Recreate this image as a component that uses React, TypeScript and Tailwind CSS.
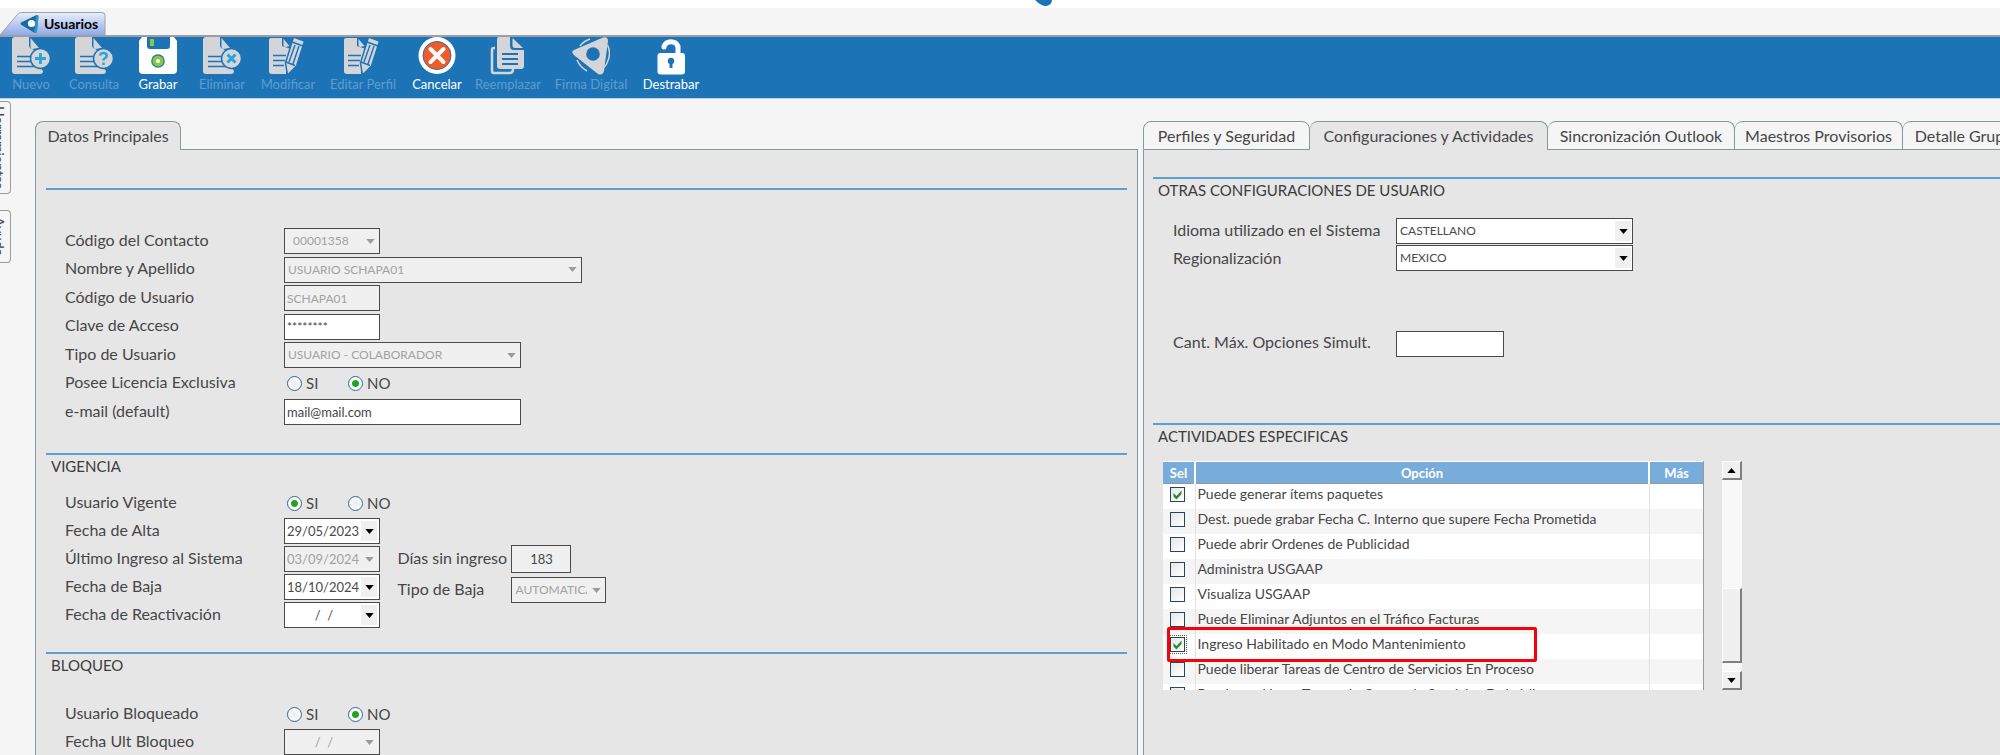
import { useState, type ReactNode } from "react";
import clsx from "clsx";

function Logo({ className }: { className?: string }) {
    return (
        <svg viewBox="0 0 20 20" className={className} aria-hidden="true">
            <path d="M1.5 8.2 16 1.2c1.600-.7 2.500.3 2.400 1.800L17 17c-.2 1.800-1.600 2.400-3 1.400L1.600 11c-1.300-.9-1.300-2.100-.1-2.800z" fill="#1a6a9e" />
            <path d="M16 1.200c1.600-.7 2.500.3 2.400 1.800L17 17c-.2 1.800-1.600 2.400-3 1.400z" fill="#2f93c4" />
            <circle cx="11.500" cy="9.500" r="3.600" fill="#fff" />
        </svg>
    );
}

function Page() {
    return (
        <>
            <path d="M0 3q0-3 3-3h14v8q0 3 3 4l8 4v14l3 4q0 3-3 3H3q-3 0-3-3z" fill="#d3d5d8" />
            <path d="M18.500 1l8.500 10-6.500 1q-2 0-2-2z" fill="#d3d5d8" />
            <path d="M5 19.500h15M5 24.500h15M5 29.500h17" stroke="#1c74b7" strokeWidth="1.500" />
        </>
    );
}

function Pencil() {
    return (
        <>
            <path d="M0 3q0-2 2-2h11v8l9 3-5 15v10H3q-3 0-3-3z" fill="#d3d5d8" />
            <path d="M14.500 2l6 7-4 1q-2 0-2-2z" fill="#d3d5d8" />
            <path d="M4 18.500h13M4 23.500h12M4 28.500h11" stroke="#1c74b7" strokeWidth="1.500" />
            <path d="M24.500 0l11 4-8 25-9 9-2-12z" fill="#d3d5d8" stroke="#1c74b7" strokeWidth="1.500" strokeLinejoin="round" />
            <path d="M23 5l11 4M17 25l9 3.500M26 8l-6 17M30 9l-6 18" stroke="#1c74b7" strokeWidth="1.400" fill="none" />
        </>
    );
}

const icons: Record<string, ReactNode> = {
    Nuevo: (
        <>
            <Page />
            <circle cx="28.500" cy="21.500" r="10" fill="#d3d5d8" stroke="#1c74b7" strokeWidth="1.500" />
            <path d="M28.500 16v11M23 21.500h11" stroke="#2ba3dc" strokeWidth="2.800" />
        </>
    ),
    Consulta: (
        <>
            <Page />
            <circle cx="28.500" cy="21.500" r="10" fill="#d3d5d8" stroke="#1c74b7" strokeWidth="1.500" />
            <path d="M25 18.500q.5-2.500 3.500-2.500t3.300 2.500q0 1.600-1.800 2.500-1.500.8-1.500 2.500M28.500 25.500v2.500" stroke="#2ba3dc" strokeWidth="2.500" fill="none" />
        </>
    ),
    Grabar: (
        <>
            <path d="M3 0h32l3 4v29q0 4-4 4H4q-4 0-4-4V4z" fill="#fff" />
            <path d="M8 0h23v9q0 3-3 3H11q-3 0-3-3z" fill="#1c74b7" />
            <path d="M11 2h4v7h-4z" fill="#8cc63f" />
            <circle cx="19" cy="24" r="6.800" fill="#1c74b7" />
            <circle cx="19" cy="24" r="5.600" fill="#8cc63f" />
            <circle cx="19" cy="24" r="2" fill="#fff" />
        </>
    ),
    Eliminar: (
        <>
            <Page />
            <circle cx="28.500" cy="21.500" r="10" fill="#d3d5d8" stroke="#1c74b7" strokeWidth="1.500" />
            <path d="M24.500 17.500l8 8M32.500 17.500l-8 8" stroke="#2ba3dc" strokeWidth="3" />
        </>
    ),
    Modificar: <Pencil />,
    "Editar Perfil": <Pencil />,
    Cancelar: (
        <>
            <circle cx="19" cy="18.500" r="18.500" fill="#fff" />
            <circle cx="19" cy="18.500" r="14" fill="#f15a2b" stroke="#3b6f9c" strokeWidth="1" />
            <path d="M12.500 12l13 13M25.500 12l-13 13" stroke="#fff" strokeWidth="4" strokeLinecap="round" />
        </>
    ),
    Reemplazar: (
        <>
            <path d="M6 11H5q-2 0-2 2v21q0 2 2 2h16q3 0 3-4" fill="none" stroke="#d3d5d8" strokeWidth="2.500" />
            <path d="M9 0h12v9q0 4 4 4h10v16q0 3-3 3H11q-3 0-3-3V3q0-2 1-3z" fill="#d3d5d8" />
            <path d="M23.500 1L34 11h-8q-2.500 0-2.500-2z" fill="#d3d5d8" />
            <path d="M13 17h16M13 22h16M13 27h16" stroke="#1c74b7" strokeWidth="1.800" />
        </>
    ),
    "Firma Digital": (
        <>
            <path d="M35.500 8q4 8 0 17-1 3-4 6M5 23q3 7 10 11M8 9q4-5 10-7" fill="none" stroke="#d3d5d8" strokeWidth="1.500" />
            <path d="M2 13L31 .5q5-1.500 5 3.500l-4 30q-1.500 5-6 3L2.500 18.500q-4-3.500-.5-5.500z" fill="#d3d5d8" />
            <circle cx="21" cy="17" r="6.800" fill="#1c74b7" />
        </>
    ),
    Destrabar: (
        <>
            <path d="M12 10V9.500a7.500 7.500 0 0 1 14 0V18" fill="none" stroke="#fff" strokeWidth="5" strokeLinecap="round" />
            <rect x="5.500" y="16" width="27.500" height="21.500" rx="3" fill="#fff" />
            <circle cx="19" cy="24" r="3.200" fill="#1c74b7" />
            <path d="M17.500 25h3v6h-3z" fill="#1c74b7" />
        </>
    ),
};

const toolbar = [
    { label: "Nuevo", enabled: false },
    { label: "Consulta", enabled: false },
    { label: "Grabar", enabled: true },
    { label: "Eliminar", enabled: false },
    { label: "Modificar", enabled: false },
    { label: "Editar Perfil", enabled: false },
    { label: "Cancelar", enabled: true },
    { label: "Reemplazar", enabled: false },
    { label: "Firma Digital", enabled: false },
    { label: "Destrabar", enabled: true },
];

const initialOptions = [
    { label: "Puede generar ítems paquetes", checked: true },
    { label: "Dest. puede grabar Fecha C. Interno que supere Fecha Prometida", checked: false },
    { label: "Puede abrir Ordenes de Publicidad", checked: false },
    { label: "Administra USGAAP", checked: false },
    { label: "Visualiza USGAAP", checked: false },
    { label: "Puede Eliminar Adjuntos en el Tráfico Facturas", checked: false },
    { label: "Ingreso Habilitado en Modo Mantenimiento", checked: true },
    { label: "Puede liberar Tareas de Centro de Servicios En Proceso", checked: false },
    { label: "Puede ver Horas Tareas de Centro de Servicios En Inédito", checked: false },
];

// row that keeps the keyboard focus mark
const focusedOption = 6;

const fieldBase = "h-[26px] border border-[#4a4a4a] leading-5 rounded-none outline-none opacity-100";

function Arrow({ up }: { up?: boolean }) {
    return (
        <svg viewBox="0 0 10 6" className="w-[9px] h-[5px] fill-current" aria-hidden="true">
            <path d={up ? "M0 6h10L5 0z" : "M0 0h10L5 6z"} />
        </svg>
    );
}

function Row({ id, label, children }: { id: string; label: string; children: ReactNode }) {
    return (
        <div className="flex items-center h-[26px]">
            <label htmlFor={id} className="w-[219px] shrink-0 leading-5 pb-[3px]">{label}</label>
            {children}
        </div>
    );
}

function Combo({ id, value, width, disabled, pad }: { id: string; value: string; width: string; disabled?: boolean; pad?: string }) {
    return (
        <div className={clsx("relative", width)}>
            <select
                id={id}
                disabled={disabled}
                defaultValue={value}
                className={clsx(fieldBase, "block w-full appearance-none text-[12px] pr-[18px]", pad ?? "pl-[3px]", disabled ? "bg-[#f0f0f0] text-[#a2a2a2]" : "bg-white text-[#4a4a4a]")}
            >
                <option>{value}</option>
            </select>
            <span
                className={clsx(
                    "absolute right-[2px] top-[3px] bottom-[3px] w-4 flex items-center justify-center pointer-events-none bg-[#f0f0f0]",
                    disabled ? "text-[#9a9a9a]" : "text-black",
                )}
            >
                <Arrow />
            </span>
        </div>
    );
}

function DateField({ id, value, disabled }: { id: string; value: string; disabled?: boolean }) {
    return (
        <div className={clsx("flex w-24 h-[26px] border border-[#4a4a4a] p-[2px]", disabled ? "bg-[#f0f0f0] text-[#a2a2a2]" : "bg-white text-[#4a4a4a]")}>
            <input
                id={id}
                disabled={disabled}
                defaultValue={value}
                className={clsx("w-0 flex-1 text-[13px] leading-5 outline-none whitespace-pre", value.length < 10 && "text-center")}
            />
            <button
                type="button"
                disabled={disabled}
                aria-label="Abrir calendario"
                className={clsx("w-4 flex items-center justify-center bg-[#f0f0f0]", disabled ? "text-[#9a9a9a]" : "text-black")}
            >
                <Arrow />
            </button>
        </div>
    );
}

function YesNo({ id, value }: { id: string; value: "SI" | "NO" }) {
    const [selected, setSelected] = useState(value);
    const radio =
        "appearance-none size-[15px] rounded-full border border-[#2f6596] bg-white bg-[radial-gradient(circle,#ececec,#ffffff)] checked:bg-[radial-gradient(circle,#1fa51f_0_3px,#ffffff_4px)]";

    return (
        <div className="flex items-center pl-[3px] gap-[29px] text-[15px]">
            <label className="flex items-center gap-1 w-8">
                <input id={id} type="radio" name={id} checked={selected === "SI"} onChange={() => setSelected("SI")} className={radio} />
                SI
            </label>
            <label className="flex items-center gap-1">
                <input type="radio" name={id} checked={selected === "NO"} onChange={() => setSelected("NO")} className={radio} />
                NO
            </label>
        </div>
    );
}

function Section({ title, children }: { title?: string; children?: ReactNode }) {
    return (
        <section className="border-t-2 border-[#5b9fd3]">
            {title && <h2 className="pl-[5px] text-[15px] leading-[22px] text-[#3c3c3c]">{title}</h2>}
            {children}
        </section>
    );
}

function Tab({ label, width, active }: { label: string; width: string; active?: boolean }) {
    return (
        <button
            type="button"
            role="tab"
            aria-selected={!!active}
            className={clsx(
                "h-[29px] shrink-0 rounded-t-lg border-t border-r border-[#87969b] whitespace-nowrap",
                width,
                active ? "bg-[#e6e6e6]" : "bg-[#f5f5f5] border-b",
            )}
        >
            {label}
        </button>
    );
}

function MainData() {
    return (
        <section className="flex flex-col min-w-0">
            <div role="tablist" className="flex">
                <Tab label="Datos Principales" width="w-[146px] border-l" active />
                <div className="flex-1 border-b border-[#87969b]" />
            </div>
            <div className="flex-1 border-x border-[#87969b] bg-[#e6e6e6] pt-[38px] px-[10px]">
                <Section>
                    <div className="flex flex-col justify-between h-[197px] mt-[38px] pl-[19px]">
                        <Row id="contacto" label="Código del Contacto">
                            <Combo id="contacto" value="00001358" width="w-24" pad="pl-2" disabled />
                        </Row>
                        <Row id="nombre" label="Nombre y Apellido">
                            <Combo id="nombre" value="USUARIO SCHAPA01" width="w-[298px]" disabled />
                        </Row>
                        <Row id="codigo" label="Código de Usuario">
                            <input id="codigo" disabled defaultValue="SCHAPA01" className={clsx(fieldBase, "w-24 px-[2px] text-[12px] bg-[#f0f0f0] text-[#a2a2a2]")} />
                        </Row>
                        <Row id="clave" label="Clave de Acceso">
                            <input id="clave" defaultValue="********" className={clsx(fieldBase, "w-24 px-[2px] text-[12px] bg-white")} />
                        </Row>
                        <Row id="tipo" label="Tipo de Usuario">
                            <Combo id="tipo" value="USUARIO - COLABORADOR" width="w-[237px]" disabled />
                        </Row>
                        <Row id="licencia" label="Posee Licencia Exclusiva">
                            <YesNo id="licencia" value="NO" />
                        </Row>
                        <Row id="email" label="e-mail (default)">
                            <input id="email" type="email" defaultValue="mail@mail.com" className={clsx(fieldBase, "w-[237px] px-[2px] text-[13px] bg-white")} />
                        </Row>
                    </div>
                </Section>
                <div className="mt-7">
                    <Section title="VIGENCIA">
                        <div className="flex mt-[13px] pl-[19px]">
                            <div className="flex flex-col gap-[2px]">
                                <Row id="vigente" label="Usuario Vigente">
                                    <YesNo id="vigente" value="SI" />
                                </Row>
                                <Row id="alta" label="Fecha de Alta">
                                    <DateField id="alta" value="29/05/2023" />
                                </Row>
                                <Row id="ultimo" label="Último Ingreso al Sistema">
                                    <DateField id="ultimo" value="03/09/2024" disabled />
                                </Row>
                                <Row id="baja" label="Fecha de Baja">
                                    <DateField id="baja" value="18/10/2024" />
                                </Row>
                                <Row id="reactivacion" label="Fecha de Reactivación">
                                    <DateField id="reactivacion" value="/  /" />
                                </Row>
                            </div>
                            <div className="grid grid-cols-[114px_auto] content-start items-center gap-y-1 pl-[7px] pt-[55px]">
                                <label htmlFor="dias" className="whitespace-nowrap leading-5 pb-[3px]">Días sin ingreso</label>
                                <input id="dias" readOnly defaultValue="183" className="w-[60px] h-7 border border-[#4a4a4a] bg-[#f0f0f0] text-center text-[13px]" />
                                <label htmlFor="tipobaja" className="leading-5 pb-[3px]">Tipo de Baja</label>
                                <Combo id="tipobaja" value="AUTOMATICA" width="w-[95px]" disabled />
                            </div>
                        </div>
                    </Section>
                </div>
                <div className="mt-6">
                    <Section title="BLOQUEO">
                        <div className="flex flex-col gap-[2px] mt-[25px] pl-[19px]">
                            <Row id="bloqueado" label="Usuario Bloqueado">
                                <YesNo id="bloqueado" value="NO" />
                            </Row>
                            <Row id="ultbloqueo" label="Fecha Ult Bloqueo">
                                <DateField id="ultbloqueo" value="/  /" disabled />
                            </Row>
                        </div>
                    </Section>
                </div>
            </div>
        </section>
    );
}

function OptionsTable() {
    const [options, setOptions] = useState(initialOptions);

    const toggle = (index: number) => {
        setOptions(options.map((o, i) => (i === index ? { ...o, checked: !o.checked } : o)));
    };

    return (
        <div className="relative w-[541px] h-[229px] overflow-hidden border-r border-[#9a9a9a]">
            <table className="w-full table-fixed border-collapse text-[14px] leading-5">
                <colgroup>
                    <col className="w-8" />
                    <col />
                    <col className="w-[54px]" />
                </colgroup>
                <thead>
                    <tr className="h-[22px] bg-[#78addb] text-white text-[13px] border-t border-t-white border-b border-b-[#8f9ba5]">
                        <th className="p-0 font-bold border-r-2 border-white">Sel</th>
                        <th className="p-0 font-bold border-r-2 border-white">Opción</th>
                        <th className="p-0 font-bold">Más</th>
                    </tr>
                </thead>
                <tbody>
                    {options.map((option, i) => (
                        <tr key={option.label} className="h-[25px] bg-white even:bg-[#f5f5f5]">
                            <td className="p-0 pb-1 border-r border-[#e2e2e2]">
                                <div className="flex justify-center pr-[2px]">
                                    <label className="relative flex size-[15px]">
                                        <input
                                            type="checkbox"
                                            aria-label={option.label}
                                            checked={option.checked}
                                            onChange={() => toggle(i)}
                                            className={clsx(
                                                "appearance-none size-[15px] border border-[#26455e] bg-linear-to-br from-[#e6e6e6] to-white",
                                                i === focusedOption && "outline-1 outline-dotted outline-offset-1 outline-[#555]",
                                            )}
                                        />
                                        {option.checked && (
                                            <svg viewBox="0 0 15 15" className="absolute inset-0 pointer-events-none" aria-hidden="true">
                                                <path d="M3.500 6l3 3 5-5.500v3.500l-5 5.500-3-3z" fill="#2c8a2c" />
                                            </svg>
                                        )}
                                    </label>
                                </div>
                            </td>
                            <td className="p-0 pb-[5px] pl-[2px] border-r border-[#e2e2e2] whitespace-nowrap">{option.label}</td>
                            <td className="p-0" />
                        </tr>
                    ))}
                </tbody>
            </table>
        </div>
    );
}

function ScrollBar() {
    const raised = "border border-t-white border-l-white border-r-2 border-b-2 border-r-[#808080] border-b-[#808080] bg-[#f0f0f0]";

    return (
        <div className="flex flex-col w-5 h-[229px] bg-[#f8f8f8] text-black">
            <button type="button" aria-label="Subir" className={clsx(raised, "h-[19px] flex items-center justify-center")}>
                <Arrow up />
            </button>
            <div className="flex-1" />
            <div className={clsx(raised, "h-[75px]")} />
            <div className="h-2" />
            <button type="button" aria-label="Bajar" className={clsx(raised, "h-[19px] flex items-center justify-center")}>
                <Arrow />
            </button>
        </div>
    );
}

function Settings() {
    return (
        <section className="flex flex-col min-w-0 overflow-hidden">
            <div role="tablist" className="flex">
                <Tab label="Perfiles y Seguridad" width="w-[167px] border-l" />
                <Tab label="Configuraciones y Actividades" width="w-[238px]" active />
                <Tab label="Sincronización Outlook" width="w-[187px]" />
                <Tab label="Maestros Provisorios" width="w-[168px]" />
                <Tab label="Detalle Grupos" width="w-[130px]" />
            </div>
            <div className="flex-1 border-l border-[#87969b] bg-[#e6e6e6] pt-[27px] pl-[9px]">
                <Section title="OTRAS CONFIGURACIONES DE USUARIO">
                    <div className="grid grid-cols-[223px_auto] justify-start items-center gap-y-[1px] mt-[17px] pl-5">
                        <label htmlFor="idioma" className="whitespace-nowrap leading-5 pb-[2px]">Idioma utilizado en el Sistema</label>
                        <Combo id="idioma" value="CASTELLANO" width="w-[237px]" />
                        <label htmlFor="region" className="leading-5">Regionalización</label>
                        <Combo id="region" value="MEXICO" width="w-[237px]" />
                    </div>
                    <div className="grid grid-cols-[223px_auto] justify-start items-center mt-[60px] pl-5">
                        <label htmlFor="maximo" className="leading-5 pb-[5px]">Cant. Máx. Opciones Simult.</label>
                        <input id="maximo" className={clsx(fieldBase, "w-[108px] px-[2px] text-[12px] bg-white")} />
                    </div>
                </Section>
                <div className="mt-[66px]">
                    <Section title="ACTIVIDADES ESPECIFICAS">
                        <div className="relative flex gap-[18px] mt-[14px] pl-[10px]">
                            <OptionsTable />
                            <ScrollBar />
                            {/* highlight over the maintenance mode option */}
                            <div className="absolute left-[14px] top-[166px] w-[370px] h-[35px] border-[3px] border-[#fb0007] rounded-xs pointer-events-none" />
                        </div>
                    </Section>
                </div>
            </div>
        </section>
    );
}

function SideTab({ label, height }: { label: string; height: string }) {
    return (
        <button
            type="button"
            className={clsx("flex items-center justify-start w-[11px] rounded-r-sm border border-l-0 border-[#9b9b9b] bg-[#f5f5f5] overflow-hidden", height)}
        >
            <span className="[writing-mode:vertical-rl] -ml-[10px] text-[14px] leading-[18px] shrink-0">{label}</span>
        </button>
    );
}

export default function App() {
    return (
        <div className="flex flex-col h-screen overflow-hidden bg-[#f5f5f5] text-[#464646] text-[16px] font-[Lato,'Trebuchet_MS',sans-serif]">
            <div className="flex justify-center h-2 bg-white pl-[88px]">
                <svg viewBox="0 0 20 8" className="w-5 h-2 overflow-visible" aria-hidden="true">
                    <path d="M1 0h17q0 5-6 6-5 0-11-6z" fill="#1c74b7" />
                </svg>
            </div>
            <header>
                <div className="flex items-end h-[29px] border-b-2 border-[#9b9ea3]">
                    <div className="relative h-[23px] w-[106px]">
                        <svg viewBox="0 0 106 23" className="absolute inset-0" aria-hidden="true">
                            <defs>
                                <linearGradient id="tabfill" x1="0" y1="0" x2="0" y2="1">
                                    <stop offset="0" stopColor="#e9effb" />
                                    <stop offset="1" stopColor="#8faae6" />
                                </linearGradient>
                            </defs>
                            <path d="M0 23L17 3q2-2.500 5-2.500h80q3 0 3 3V23" fill="url(#tabfill)" stroke="#a3a3a3" />
                        </svg>
                        <div className="relative flex items-center gap-1 h-full pl-5 text-black font-bold text-[14px]">
                            <Logo className="size-5" />
                            Usuarios
                        </div>
                    </div>
                </div>
                <nav className="grid grid-cols-[62px_64px_64px_64px_68px_82px_66px_76px_90px_70px] h-[62px] bg-[#1c74b7] border-b border-[#b5d3e8]">
                    {toolbar.map(({ label, enabled }) => (
                        <button
                            key={label}
                            type="button"
                            disabled={!enabled}
                            className={clsx("flex flex-col items-center text-[13px] leading-[18px] whitespace-nowrap", enabled ? "text-white" : "text-[#5c9dd1]")}
                        >
                            <svg viewBox="0 0 38 38" className="size-[38px]" aria-hidden="true">{icons[label]}</svg>
                            {label}
                        </button>
                    ))}
                </nav>
            </header>
            <div className="flex flex-1">
                <aside className="flex flex-col gap-4 w-[35px] shrink-0 pt-[2px]">
                    <SideTab label="Herramientas" height="h-[93px]" />
                    <SideTab label="Ayuda" height="h-[53px]" />
                </aside>
                <main className="flex-1 min-w-0 grid grid-cols-[1103fr_857fr] gap-x-[5px] pt-[22px]">
                    <MainData />
                    <Settings />
                </main>
            </div>
        </div>
    );
}
